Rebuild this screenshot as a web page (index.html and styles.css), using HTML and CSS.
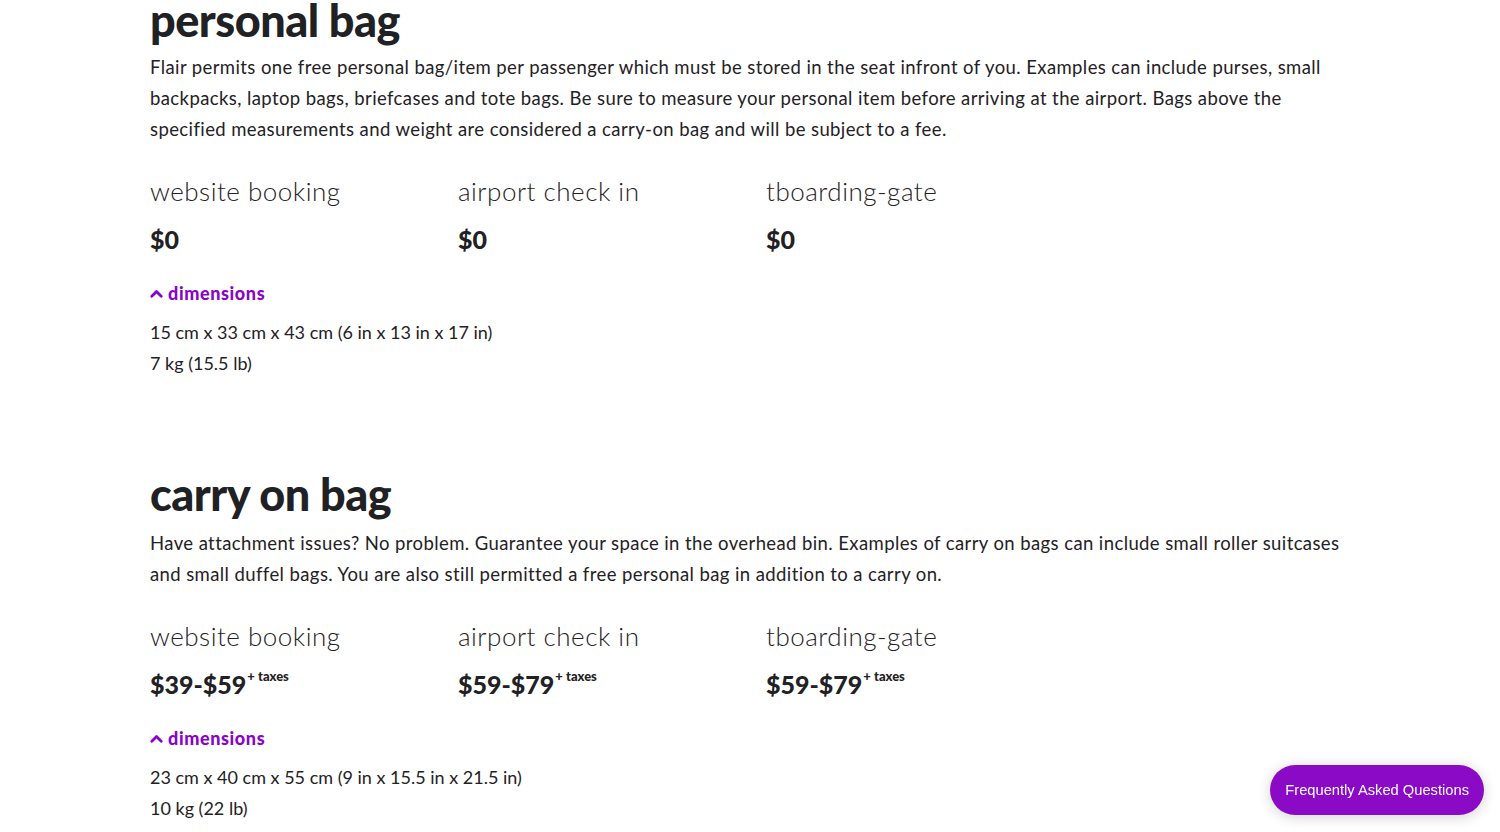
FILE: index.html
```html
<!DOCTYPE html>
<html>
<head>
	<link rel="stylesheet" href="styles.css">
</head>
<body>
	<main class="page">
		<section class="bag">
			<h2>personal bag</h2>
			<p class="intro">Flair permits one free personal bag/item per passenger which must be stored in the seat infront of you. Examples can include purses, small backpacks, laptop bags, briefcases and tote bags. Be sure to measure your personal item before arriving at the airport. Bags above the specified measurements and weight are considered a carry-on bag and will be subject to a fee.</p>

			<div class="prices">
				<div class="price">
					<h3>website booking</h3>
					<span class="amount">$0</span>
				</div>
				<div class="price">
					<h3>airport check in</h3>
					<span class="amount">$0</span>
				</div>
				<div class="price">
					<h3>tboarding-gate</h3>
					<span class="amount">$0</span>
				</div>
			</div>

			<button class="toggle">
				<svg width="13" height="9" viewBox="0 0 13 9"><path d="M1.8 7.2 6.5 2.6 11.2 7.2" fill="none" stroke="currentColor" stroke-width="2.8" stroke-linecap="round" stroke-linejoin="round"/></svg>
				dimensions
			</button>
			<div class="dims">
				<div>15 cm x 33 cm x 43 cm (6 in x 13 in x 17 in)</div>
				<div>7 kg (15.5 lb)</div>
			</div>
		</section>

		<section class="bag">
			<h2>carry on bag</h2>
			<p class="intro">Have attachment issues? No problem. Guarantee your space in the overhead bin. Examples of carry on bags can include small roller suitcases and small duffel bags. You are also still permitted a free personal bag in addition to a carry on.</p>

			<div class="prices">
				<div class="price">
					<h3>website booking</h3>
					<span class="amount">$39-$59<sup>+ taxes</sup></span>
				</div>
				<div class="price">
					<h3>airport check in</h3>
					<span class="amount">$59-$79<sup>+ taxes</sup></span>
				</div>
				<div class="price">
					<h3>tboarding-gate</h3>
					<span class="amount">$59-$79<sup>+ taxes</sup></span>
				</div>
			</div>

			<button class="toggle">
				<svg width="13" height="9" viewBox="0 0 13 9"><path d="M1.8 7.2 6.5 2.6 11.2 7.2" fill="none" stroke="currentColor" stroke-width="2.8" stroke-linecap="round" stroke-linejoin="round"/></svg>
				dimensions
			</button>
			<div class="dims">
				<div>23 cm x 40 cm x 55 cm (9 in x 15.5 in x 21.5 in)</div>
				<div>10 kg (22 lb)</div>
			</div>
		</section>
	</main>

	<a class="faq" href="#">Frequently Asked Questions</a>
</body>
</html>
```
FILE: styles.css
```css
body {
	margin: 0;
	background: #fff;
	color: #1f2125;
	font-family: Lato, "Noto Sans", sans-serif;
	overflow: hidden;
}

.page {
	padding: 0 150px;
	margin-top: -6px;
}

.bag + .bag {
	margin-top: 89px;
}

h2 {
	margin: 0;
	font-size: 45px;
	line-height: 52px;
	font-weight: 900;
	letter-spacing: -0.5px;
}

.bag + .bag .intro {
	margin-top: 8px;
}

.intro {
	margin: 6px 0 0;
	max-width: 1200px;
	font-size: 18.5px;
	line-height: 31px;
	letter-spacing: 0.4px;
}

.prices {
	display: grid;
	grid-template-columns: repeat(3, 308px);
	margin-top: 28px;
}

h3 {
	margin: 0;
	font-size: 26px;
	line-height: 36px;
	font-weight: 300;
	letter-spacing: 0.5px;
}

.amount {
	display: block;
	margin-top: 15px;
	font-size: 25px;
	line-height: 30px;
	font-weight: 900;
}

.amount sup {
	font-size: 13px;
	line-height: 0;
	vertical-align: 13px;
	margin-left: 1px;
}

.toggle {
	display: flex;
	align-items: center;
	gap: 5px;
	margin-top: 27px;
	padding: 0;
	border: 0;
	background: none;
	color: #8a04c8;
	font-family: inherit;
	font-size: 18px;
	line-height: 24px;
	font-weight: 900;
	letter-spacing: 0.6px;
	cursor: pointer;
}

.dims {
	margin-top: 12px;
	font-size: 18px;
	line-height: 31px;
}

.faq {
	position: fixed;
	right: 16px;
	bottom: 17px;
	padding: 15px 15px;
	border-radius: 26px;
	background: #8a0ac6;
	color: #fff;
	font-family: "Liberation Sans", Arial, sans-serif;
	font-size: 14.7px;
	line-height: 20px;
	text-decoration: none;
	box-shadow: 0 2px 14px rgba(0, 0, 0, 0.18);
}
```
